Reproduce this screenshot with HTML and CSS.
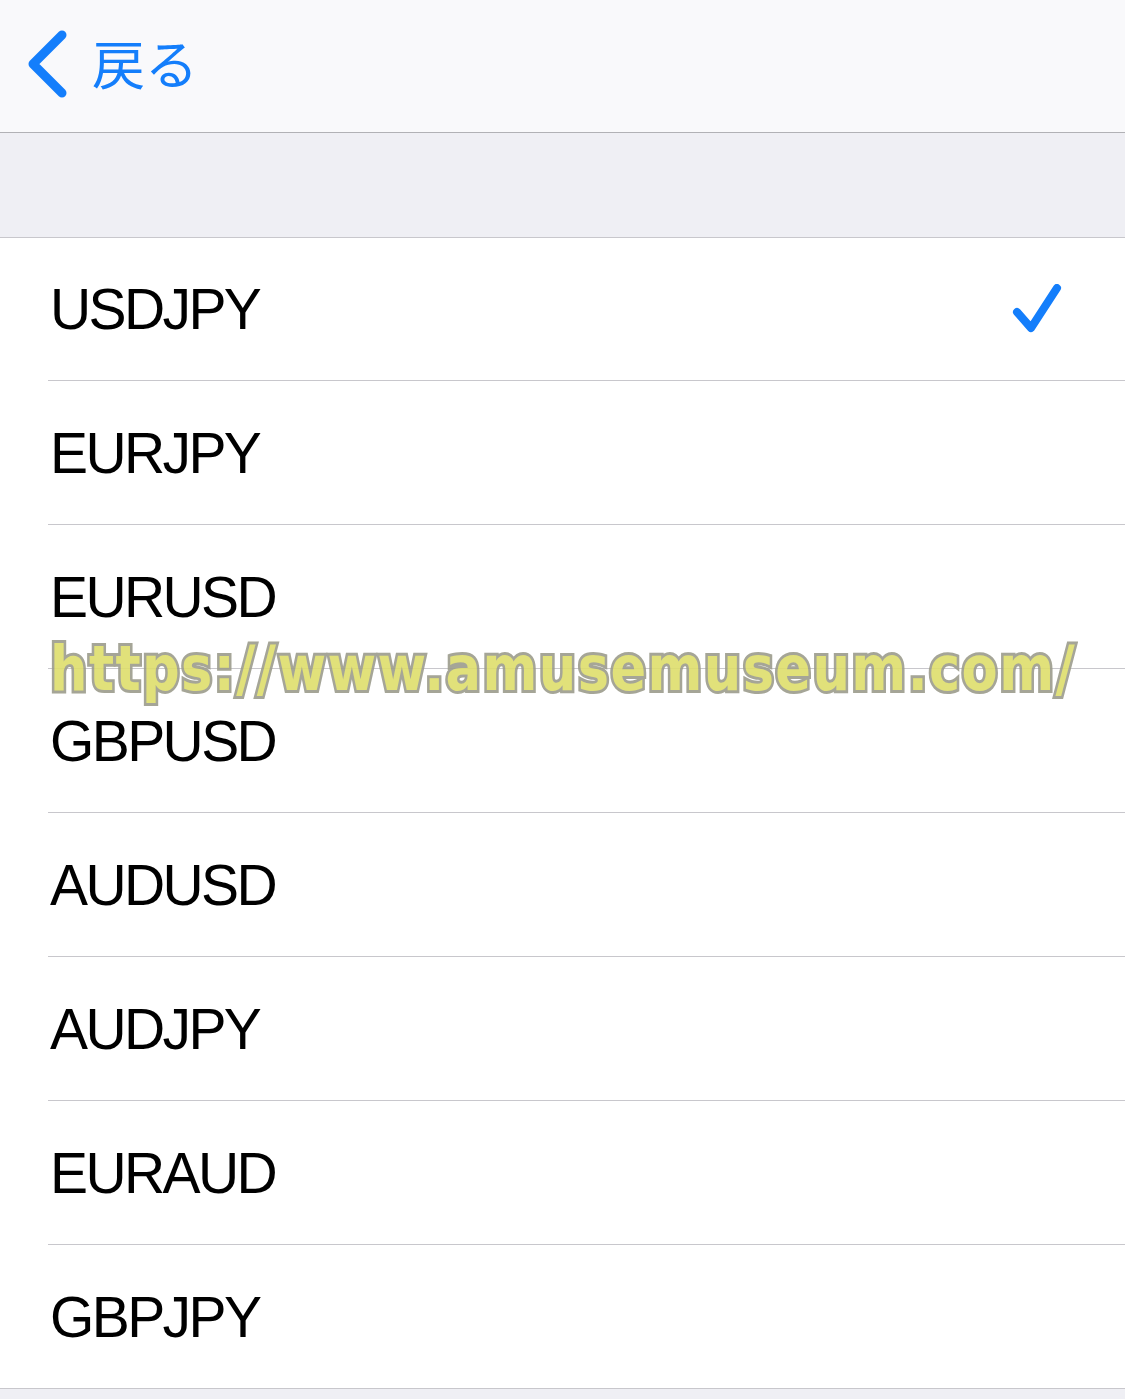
FILE: index.html
```html
<!DOCTYPE html>
<html lang="ja">
<head>
  <meta charset="UTF-8">
  <title>通貨ペア</title>
  <link rel="stylesheet" href="styles.css">
</head>
<body>

<div class="navbar">
  <a class="back" href="#">
    <svg class="chevron" width="44" height="76" viewBox="0 0 44 76">
      <polyline points="34,8 5,37 34,66" fill="none" stroke="#147efb" stroke-width="9" stroke-linecap="round" stroke-linejoin="round"/>
    </svg>
    <span class="back-label">戻る</span>
  </a>
</div>

<div class="spacer"></div>

<div class="list-wrap">
  <ul class="list">
    <li class="row selected">
      <span class="label">USDJPY</span>
      <svg class="check" width="60" height="60" viewBox="0 0 60 60">
        <polyline points="7,28 21,44 47,4" fill="none" stroke="#147efb" stroke-width="8" stroke-linecap="round" stroke-linejoin="round"/>
      </svg>
    </li>
    <li class="row"><span class="label">EURJPY</span></li>
    <li class="row"><span class="label">EURUSD</span></li>
    <li class="row"><span class="label">GBPUSD</span></li>
    <li class="row"><span class="label">AUDUSD</span></li>
    <li class="row"><span class="label">AUDJPY</span></li>
    <li class="row"><span class="label">EURAUD</span></li>
    <li class="row"><span class="label">GBPJPY</span></li>
  </ul>
  <div class="watermark">https://www.amusemuseum.com/</div>
</div>

</body>
</html>
```

FILE: styles.css
```css
body {
  margin: 0;
  background: #efeff4;
  font-family: 'Liberation Sans', Arial, sans-serif;
}
.navbar {
  height: 132px;
  background: #f9f9fb;
  border-bottom: 1px solid #b1b1b5;
  display: flex;
  align-items: center;
}
.back {
  display: flex;
  align-items: center;
  text-decoration: none;
  margin-left: 28px;
  margin-top: -2px;
}
.chevron {
  display: block;
}
.back-label {
  color: #147efb;
  font-family: 'Noto Sans CJK JP', sans-serif;
  font-weight: 400;
  font-size: 53px;
  margin-left: 20px;
  margin-top: -6px;
}
.spacer {
  height: 104px;
  background: #efeff4;
  border-bottom: 1px solid #c8c7cc;
}
.list-wrap {
  position: relative;
}
.list {
  list-style: none;
  margin: 0;
  padding: 0 0 0 48px;
  background: #fff;
  border-bottom: 1px solid #c8c7cc;
}
.row {
  height: 143px;
  display: flex;
  align-items: center;
  justify-content: space-between;
  border-bottom: 1px solid #c8c7cc;
}
.row:first-child {
  height: 142px;
}
.row:last-child {
  border-bottom: none;
}
.label {
  font-size: 57px;
  letter-spacing: -2.6px;
  color: #000;
  margin-left: 2px;
}
.check {
  margin-right: 55px;
  margin-top: 10px;
}
.watermark {
  position: absolute;
  left: 50px;
  top: 394px;
  font-family: 'DejaVu Sans', sans-serif;
  font-weight: bold;
  font-size: 62px;
  letter-spacing: 1.6px;
  color: #dede6c;
  -webkit-text-stroke: 6px #9c9c8c;
  paint-order: stroke fill;
  opacity: 0.9;
  white-space: nowrap;
  transform: scaleX(0.85);
  transform-origin: left top;
}
```
